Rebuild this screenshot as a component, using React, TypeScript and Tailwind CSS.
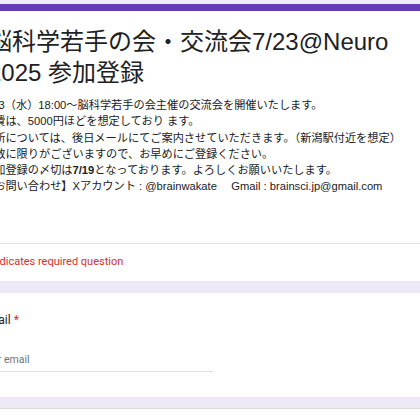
import React from "react";

const jp = { fontFamily: '"Liberation Sans", "Noto Sans CJK JP", sans-serif' };
const rb = { fontFamily: 'Roboto, "Liberation Sans", sans-serif' };

export default function App() {
  return (
    <div className="w-[420px] h-[420px] overflow-hidden bg-[#ede7f6] text-[#202124]">
      <div className="h-[4px] bg-[#f0ebf8]" />

      {/* header card */}
      <div className="bg-white">
        <div className="h-[7px] bg-[#673ab7]" />
        <div className="pt-[15px] ml-[-12px] whitespace-nowrap" style={jp}>
          <div className="text-[24px] leading-[31px]">
            <div>脳科学若手の会・交流会7/23@Neuro</div>
            <div>2025 参加登録</div>
          </div>
        </div>
        <div className="mt-[9px] ml-[-17px] whitespace-nowrap text-[11.2px] leading-[16.3px] pb-[48px]" style={jp}>
          <div>7/23（水）18:00〜脳科学若手の会主催の交流会を開催いたします。</div>
          <div>会費は、5000円ほどを想定しており ます。</div>
          <div>場所については、後日メールにてご案内させていただきます。（新潟駅付近を想定）</div>
          <div>人数に限りがございますので、お早めにご登録ください。</div>
          <div>
            参加登録の〆切は<span className="font-bold">7/19</span>となっております。よろしくお願いいたします。
          </div>
          <div>【お問い合わせ】Xアカウント : @brainwakate　 Gmail : brainsci.jp@gmail.com</div>
        </div>
        <div className="h-px bg-[#e3e3e3]" />
        <div className="h-[37px] flex items-center ml-[-17px] text-[11px] text-[#d93025]" style={rb}>
          * Indicates required question
        </div>
      </div>

      <div className="h-[12px]" />

      {/* email card */}
      <div className="bg-white h-[104px] pt-[19px]">
        <div className="ml-[-19px] text-[12px] leading-[16px] text-[#202124]" style={rb}>
          Email <span className="text-[#d93025]">*</span>
        </div>
        <div className="mt-[25px] ml-[-20px] w-[233px] border-b border-[#e0e0e0] pb-[4px]">
          <div className="text-[10.5px] leading-[14px] text-[#70757a]" style={rb}>
            Your email
          </div>
        </div>
      </div>

      <div className="h-[11px]" />
      <div className="h-px bg-[#dadce0]" />
      <div className="h-[20px] bg-white" />
    </div>
  );
}
